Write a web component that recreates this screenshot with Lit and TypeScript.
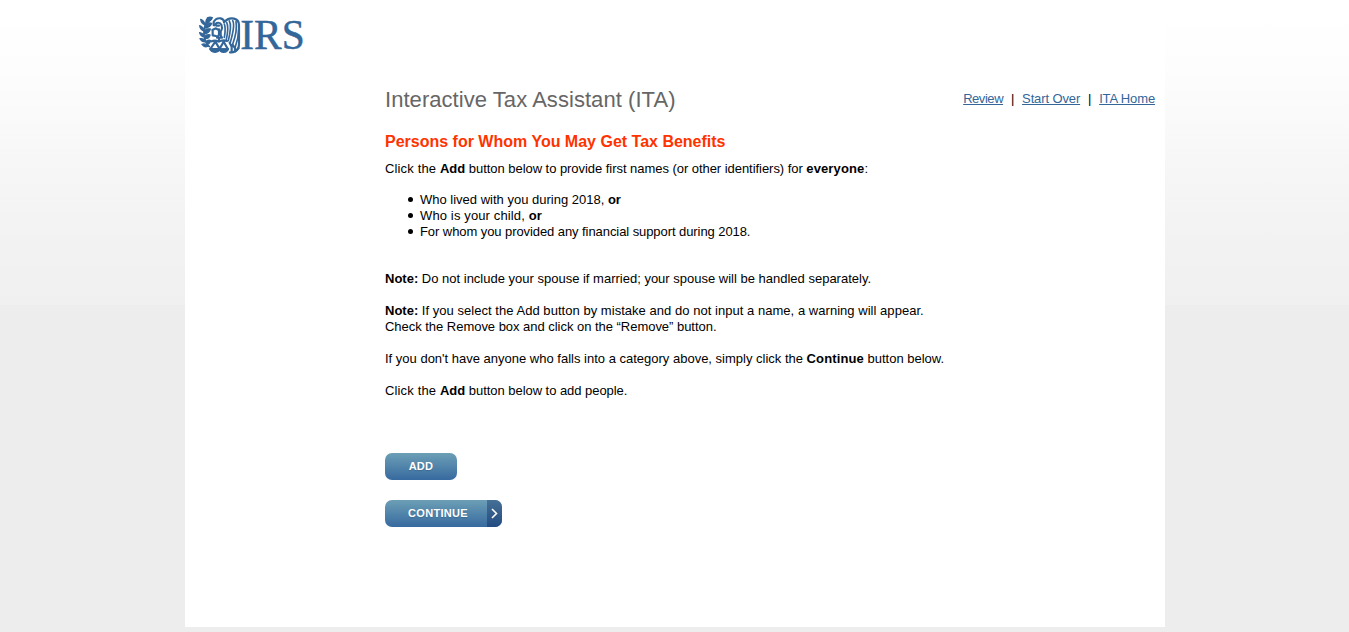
import { LitElement, html, css } from "lit";
import { customElement } from "lit/decorators.js";

@customElement("irs-logo")
class IrsLogo extends LitElement {
  static styles = css`
    :host { display: block; width: 124px; height: 54px; }
    svg { display: block; }
    .word { font-family: "Liberation Serif", serif; font-size: 127px; fill: #336699; stroke: #336699; stroke-width: 1.5; }
    .fill { fill: #336699; stroke: #336699; stroke-width: 4; stroke-linejoin: round; }
    .line { fill: none; stroke: #336699; stroke-width: 6.5; stroke-linecap: round; stroke-linejoin: round; }
    .thin { stroke-width: 5; }
  `;
  render() {
    return html`
      <svg width="124" height="54" viewBox="0 0 372 162" role="img" aria-label="IRS">
        <path class="fill" d="M52 30Q59 26 67 29Q64 40 49 43Q47 35 53 29ZM32 34Q43 38 45 51Q34 46 32 34ZM50 47Q57 43 65 46Q61 58 46 60Q44 52 50 47ZM29 53Q40 57 42 69Q31 66 29 53ZM46 66Q53 61 61 63Q58 75 43 78Q41 71 46 66ZM29 74Q39 75 43 86Q33 86 29 74ZM47 83Q54 79 60 81Q58 91 46 92ZM30 92Q41 90 49 101Q37 104 30 92ZM49 100Q56 95 62 98Q60 107 52 109ZM36 109Q46 105 56 114Q44 120 36 109Z"/>
        <path class="line thin" d="M49 41C38 66 38 96 58 116"/>
        <path class="line" d="M71 51V42Q78 29 92 31Q103 34 102 43Q115 28 132 32Q147 36 147 51V103Q148 123 137 129"/>
        <path class="line" d="M72 52L80 45Q90 42 94 50Q98 60 94 67M79 53H87M67 66L78 61L84 65M68 66V82L78 84"/>
        <path class="line thin" d="M103 48Q108 60 103 88M110 43Q117 57 109 94M118 39Q126 52 115 98M128 38Q136 51 121 103M138 41Q143 67 128 109M146 64Q146 89 136 116"/>
        <path class="line" d="M87 64V80L81 89H96L92 82V70M87 90V101M65 100Q75 95 86 101Q98 94 111 99M76 101L61 123H89ZM101 101L88 124H114Z"/>
        <path class="fill" d="M60 122H90Q88 132 75 133Q62 132 60 122ZM88 123H115Q112 132 101 133Q90 132 88 123Z"/>
        <path class="line" d="M119 104L125 116V129M128 111L135 120V128M120 133Q135 135 146 120"/>
        <text class="word" x="151" y="122" textLength="193" lengthAdjust="spacingAndGlyphs">IRS</text>
      </svg>`;
  }
}

@customElement("app-root")
class AppRoot extends LitElement {
  static styles = css`
    :host {
      display: block; box-sizing: border-box; height: 632px; overflow: hidden;
      background: #ededed linear-gradient(#fff 0, #fff 12px, #fdfdfd 70px, #f9f9f9 130px, #f3f3f3 220px, #f0f0f0 305px) top / 100% 305px no-repeat;
      font: 13px/16px "Liberation Sans", Arial, sans-serif; color: #000;
    }
    .page { width: 980px; height: 627px; margin-left: 185px; box-sizing: border-box; background: #fff; padding: 8px 10px 0 5px; }
    .main { margin-left: 195px; padding-top: 25px; }
    .top { display: flex; justify-content: space-between; height: 27px; white-space: nowrap; }
    h1 { font-size: 22px; line-height: 26px; font-weight: 400; color: #666; margin: 0; letter-spacing: 0.05px; }
    nav { display: flex; padding-top: 4px; }
    nav span { width: 19px; text-align: center; }
    a { color: #336699; text-decoration: underline; letter-spacing: -0.12px; }
    .review { letter-spacing: -0.45px; }
    h2 { margin: 18px 0 0; font-size: 16px; line-height: 20px; color: #ff3300; }
    p { margin: 16px 0 0; white-space: nowrap; }
    .lead { letter-spacing: 0.15px; }
    .intro { margin-top: 9px; }
    .rest { letter-spacing: -0.045px; }
    .everyone { letter-spacing: 0.12px; }
    .warn { letter-spacing: 0.037px; }
    .tight { letter-spacing: -0.03px; }
    ul { list-style: none; margin: 15px 0 31px; padding: 0 0 0 23px; }
    li { display: flex; align-items: center; white-space: pre; }
    li::before { content: ""; width: 5px; height: 5px; border-radius: 50%; background: #000; margin: 0 7px 2px 0; }
    .support { letter-spacing: -0.075px; }
    .child { letter-spacing: 0.13px; }
    button { display: flex; align-items: center; height: 27px; border: 0; border-radius: 7px; padding: 0; overflow: hidden;
      background: linear-gradient(#6c9fb5, #376a9f); color: #fff; font: bold 11px/13px "Liberation Sans", Arial, sans-serif; text-shadow: 0 1px 1px #3c6b90; letter-spacing: 0.3px; }
    .label { padding-bottom: 1px; }
    .add { width: 72px; margin-top: 54px; justify-content: center; }
    .continue { width: 117px; margin-top: 20px; }
    .wide { width: 102px; padding-left: 4px; box-sizing: border-box; text-align: center; }
    .arrow { display: flex; align-items: center; justify-content: center; width: 15px; height: 27px; background: linear-gradient(#467095, #234b82); }
  `;
  render() {
    return html`
      <div class="page">
        <irs-logo></irs-logo>
        <div class="main">
          <div class="top">
            <h1>Interactive Tax Assistant (ITA)</h1>
            <nav><a class="review" href="#">Review</a><span>|</span><a href="#">Start Over</a><span>|</span><a href="#">ITA Home</a></nav>
          </div>
          <h2>Persons for Whom You May Get Tax Benefits</h2>
          <p class="intro"><span class="lead">Click the </span><b>Add</b><span class="rest"> button below to provide first names (or other identifiers) for </span><b class="everyone">everyone</b>:</p>
          <ul>
            <li><span>Who lived with you during 2018, <b>or</b></span></li>
            <li><span class="child">Who is your child, <b>or</b></span></li>
            <li><span class="support">For whom you provided any financial support during 2018.</span></li>
          </ul>
          <p><b>Note:</b> Do not include your spouse if married; your spouse will be handled separately.</p>
          <p><b>Note:</b><span class="warn"> If you select the Add button by mistake and do not input a name, a warning will appear.</span><br><span class="tight">Check the Remove box and click on the “Remove” button.</span></p>
          <p>If you don't have anyone who falls into a category above, simply click the <b class="everyone">Continue</b> button below.</p>
          <p><span class="lead">Click the </span><b>Add</b><span class="rest"> button below to add people.</span></p>
          <button class="add"><span class="label">ADD</span></button>
          <button class="continue"><span class="label wide">CONTINUE</span><span class="arrow"><svg width="7" height="11" viewBox="0 0 7 11"><path d="M1 1L5.5 5.5L1 10" fill="none" stroke="#fff" stroke-width="1.6"/></svg></span></button>
        </div>
      </div>`;
  }
}
